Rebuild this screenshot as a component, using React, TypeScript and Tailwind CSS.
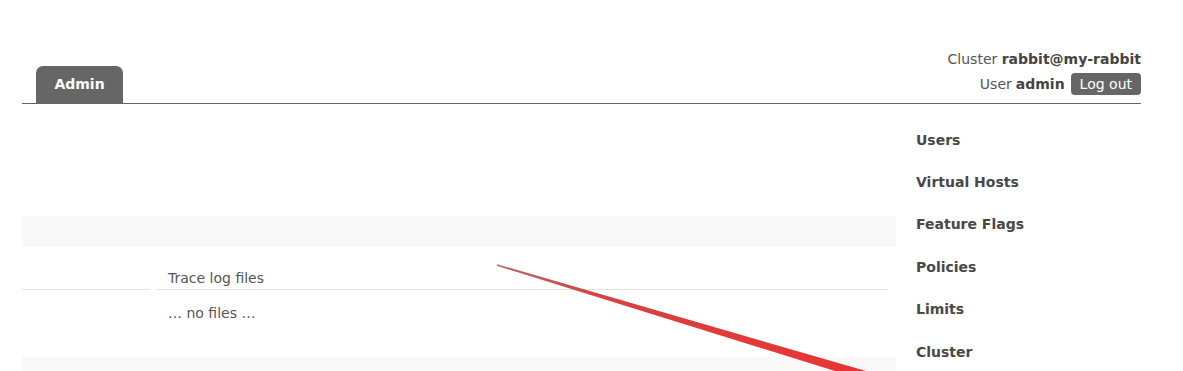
import React from 'react';

const NAV = ['Users', 'Virtual Hosts', 'Feature Flags', 'Policies', 'Limits', 'Cluster'];

export default function App() {
  return (
    <div className="relative h-[371px] w-[1183px] overflow-hidden bg-white font-['DejaVu_Sans','Verdana',sans-serif] text-[#484848]">
      {/* header */}
      <div className="ml-[22px] flex w-[1119px] items-end justify-between border-b border-[#666] pt-[50px]">
        <div className="ml-[14px] flex h-[37px] w-[87px] items-center justify-center rounded-t-[7px] bg-[#666] text-[14px] font-bold text-white">
          Admin
        </div>
        <div className="flex flex-col items-end pb-[8px] text-[14px] leading-[18px]">
          <div className="text-[#555]">
            Cluster <span className="font-bold text-[#444]">rabbit@my-rabbit</span>
          </div>
          <div className="mt-[5px] flex items-center text-[#555]">
            User <span className="ml-[4px] font-bold text-[#444]">admin</span>
            <span className="ml-[6px] flex h-[22px] items-center rounded-[4px] bg-[#666] px-[9px] text-white">
              Log out
            </span>
          </div>
        </div>
      </div>

      {/* body */}
      <div className="flex">
        <div className="ml-[22px] w-[874px] text-[14px]">
          <div className="h-[112px]" />
          <div className="h-[31px] bg-[#f8f8f8]" />
          <div className="flex h-[43px] items-end">
            <div className="h-[1px] w-[128px] bg-[#e4e4e4]" />
            <div className="ml-[5px] flex w-[733px] flex-col">
              <span className="pl-[13px] pb-[2px] leading-[18px] text-[#555]">Trace log files</span>
              <div className="h-[1px] bg-[#e4e4e4]" />
            </div>
          </div>
          <div className="h-[67px] pl-[146px] pt-[14px] leading-[18px] text-[#555]">… no files …</div>
          <div className="h-[20px] bg-[#f8f8f8]" />
        </div>
        <nav className="ml-[20px] flex flex-col pt-[15px] text-[14px] font-bold text-[#484848]">
          {NAV.map((n) => (
            <div key={n} className="flex h-[42.4px] items-center">
              {n}
            </div>
          ))}
        </nav>
      </div>

      {/* red annotation arrow */}
      <svg className="pointer-events-none absolute left-0 top-0" width="1183" height="371">
        <defs>
          <linearGradient id="arr" x1="497" y1="265" x2="860" y2="371" gradientUnits="userSpaceOnUse">
            <stop offset="0" stopColor="#b86868" />
            <stop offset="0.3" stopColor="#d84040" />
            <stop offset="1" stopColor="#e83434" />
          </linearGradient>
        </defs>
        <polygon points="496.8,265.8 497.2,264.2 866,371 835,371" fill="url(#arr)" />
      </svg>
    </div>
  );
}
